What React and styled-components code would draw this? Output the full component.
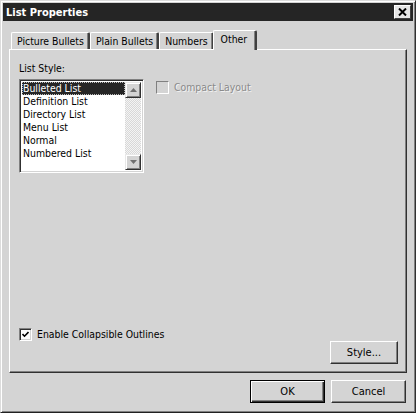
import styled, { createGlobalStyle } from "styled-components";

const GlobalStyle = createGlobalStyle`
  html, body {
    margin: 0;
    padding: 0;
    background: #d4d4d4;
  }
  * {
    box-sizing: border-box;
  }
`;

const FONT = `"DejaVu Sans Condensed", "DejaVu Sans", Tahoma, sans-serif`;

const Window = styled.div`
  width: 416px;
  height: 413px;
  display: flex;
  flex-direction: column;
  background: #d4d4d4;
  border: 1px solid;
  border-color: #dcdcdc #303030 #202020 #dcdcdc;
  box-shadow: inset 1px 1px #ffffff, inset -1px -1px #808080;
  padding: 2px;
  font-family: ${FONT};
  font-size: 10.4px;
  color: #000;
`;

const TitleBar = styled.div`
  height: 18px;
  display: flex;
  align-items: center;
  justify-content: space-between;
  background: #252525;
  padding: 0 2px 0 3px;
`;

const Title = styled.span`
  color: #fff;
  font-weight: bold;
  font-size: 11px;
`;

const CloseButton = styled.div`
  width: 17px;
  height: 14px;
  display: flex;
  align-items: center;
  justify-content: center;
  background: #e6e6e6;
  border: 1px solid;
  border-color: #ffffff #404040 #404040 #ffffff;
`;

const Body = styled.div`
  flex: 1;
  display: flex;
  flex-direction: column;
  padding: 9px 0 0 6px;
`;

const TabStrip = styled.div`
  display: flex;
  align-items: flex-end;
  height: 19px;
  padding-left: 2px;
  position: relative;
  z-index: 1;
`;

const Tab = styled.div`
  height: ${(p) => (p.$active ? "20px" : "17px")};
  margin-bottom: ${(p) => (p.$active ? "-1px" : "0")};
  padding: ${(p) => (p.$active ? "2px 8px 0 7px" : "2px 4px 0 5px")};
  margin-left: ${(p) => (p.$active ? "-1px" : "0")};
  display: flex;
  align-items: flex-start;
  background: #d4d4d4;
  border-top: 1px solid #ffffff;
  border-left: 1px solid #ffffff;
  border-right: 2px solid #404040;
  box-shadow: inset -1px 0 #808080;
  border-radius: 2px 2px 0 0;
  line-height: 13px;
  white-space: nowrap;
`;

const Panel = styled.div`
  width: 398px;
  height: 324px;
  display: flex;
  flex-direction: column;
  border: 1px solid;
  border-color: #ffffff #303030 #303030 #ffffff;
  box-shadow: inset -1px -1px #808080;
  padding: 12px 8px 8px 9px;
`;

const Label = styled.div`
  line-height: 13px;
  margin-bottom: 4px;
`;

const Row = styled.div`
  display: flex;
  align-items: flex-start;
  gap: 12px;
`;

const ListBox = styled.div`
  width: 125px;
  height: 94px;
  display: flex;
  background: #fff;
  border: 1px solid;
  border-color: #808080 #ffffff #ffffff #808080;
  box-shadow: inset 1px 1px #303030, inset -1px -1px #d4d4d4;
  padding: 2px;
`;

const Items = styled.div`
  flex: 1;
  display: flex;
  flex-direction: column;
`;

const Item = styled.div`
  height: 13px;
  line-height: 12px;
  padding-left: 1px;
  white-space: nowrap;
  background: ${(p) => (p.$selected ? "#262626" : "transparent")};
  color: ${(p) => (p.$selected ? "#fff" : "#000")};
  outline: ${(p) => (p.$selected ? "1px dotted #bbb" : "none")};
  outline-offset: -1px;
`;

const ScrollBar = styled.div`
  width: 16px;
  display: flex;
  flex-direction: column;
  justify-content: space-between;
  background-color: #ececec;
  background-image: repeating-conic-gradient(#f4f4f4 0 25%, #d8d8d8 0 50%);
  background-size: 2px 2px;
`;

const ArrowButton = styled.div`
  width: 16px;
  height: 16px;
  display: flex;
  align-items: center;
  justify-content: center;
  background: #d4d4d4;
  border: 1px solid;
  border-color: #e8e8e8 #303030 #303030 #e8e8e8;
  box-shadow: inset 1px 1px #ffffff, inset -1px -1px #808080;
`;

const CheckRow = styled.label`
  display: flex;
  align-items: center;
  gap: 5px;
  line-height: 13px;
  color: ${(p) => (p.$disabled ? "#8a8a8a" : "#000")};
  text-shadow: ${(p) => (p.$disabled ? "1px 1px #f2f2f2" : "none")};
  margin-top: ${(p) => p.$top || 0}px;
`;

const Box = styled.span`
  width: 13px;
  height: 13px;
  display: flex;
  align-items: center;
  justify-content: center;
  background: ${(p) => (p.$disabled ? "#d4d4d4" : "#fff")};
  border: 1px solid;
  border-color: #808080 #ffffff #ffffff #808080;
  box-shadow: ${(p) =>
    p.$disabled ? "none" : "inset 1px 1px #303030, inset -1px -1px #d4d4d4"};
`;

const Spacer = styled.div`
  flex: 1;
`;

const PanelFooter = styled.div`
  display: flex;
  flex-direction: column;
  gap: 0;
`;

const RightRow = styled.div`
  display: flex;
  justify-content: flex-end;
  gap: 6px;
  padding-right: ${(p) => p.$pad || 0}px;
`;

const Button = styled.div`
  width: ${(p) => p.$width || 75}px;
  height: 23px;
  display: flex;
  align-items: center;
  justify-content: center;
  font-size: 11px;
  background: #d4d4d4;
  border: 1px solid;
  border-color: ${(p) =>
    p.$default ? "#000" : "#ffffff #303030 #303030 #ffffff"};
  box-shadow: ${(p) =>
    p.$default
      ? "inset 1px 1px #ffffff, inset -1px -1px #303030, inset -2px -2px #808080"
      : "inset -1px -1px #808080"};
`;

const ButtonBar = styled(RightRow)`
  margin-top: 7px;
  padding-right: 7px;
`;

function Arrow({ down }) {
  return (
    <svg width="7" height="4" viewBox="0 0 7 4">
      <path d={down ? "M0 0 H7 L3.5 4 Z" : "M0 4 H7 L3.5 0 Z"} fill="#707070" />
    </svg>
  );
}

const styles = [
  "Bulleted List",
  "Definition List",
  "Directory List",
  "Menu List",
  "Normal",
  "Numbered List",
];

export default function App() {
  return (
    <>
      <GlobalStyle />
      <Window>
        <TitleBar>
          <Title>List Properties</Title>
          <CloseButton>
            <svg width="9" height="8" viewBox="0 0 9 8">
              <path d="M1 0.5 L8 7.5 M8 0.5 L1 7.5" stroke="#000" strokeWidth="2" />
            </svg>
          </CloseButton>
        </TitleBar>
        <Body>
          <TabStrip>
            <Tab>Picture Bullets</Tab>
            <Tab>Plain Bullets</Tab>
            <Tab>Numbers</Tab>
            <Tab $active>Other</Tab>
          </TabStrip>
          <Panel>
            <Label>List Style:</Label>
            <Row>
              <ListBox>
                <Items>
                  {styles.map((s, i) => (
                    <Item key={s} $selected={i === 0}>
                      {s}
                    </Item>
                  ))}
                </Items>
                <ScrollBar>
                  <ArrowButton>
                    <Arrow />
                  </ArrowButton>
                  <ArrowButton>
                    <Arrow down />
                  </ArrowButton>
                </ScrollBar>
              </ListBox>
              <CheckRow $disabled $top={2}>
                <Box $disabled />
                Compact Layout
              </CheckRow>
            </Row>
            <Spacer />
            <PanelFooter>
              <CheckRow>
                <Box>
                  <svg width="7" height="7" viewBox="0 0 7 7">
                    <path d="M0.5 3 L2.5 5.2 L6.5 1" stroke="#000" strokeWidth="1.6" fill="none" />
                  </svg>
                </Box>
                Enable Collapsible Outlines
              </CheckRow>
              <RightRow>
                <Button $width={68}>Style...</Button>
              </RightRow>
            </PanelFooter>
          </Panel>
          <ButtonBar>
            <Button $default>OK</Button>
            <Button>Cancel</Button>
          </ButtonBar>
        </Body>
      </Window>
    </>
  );
}
